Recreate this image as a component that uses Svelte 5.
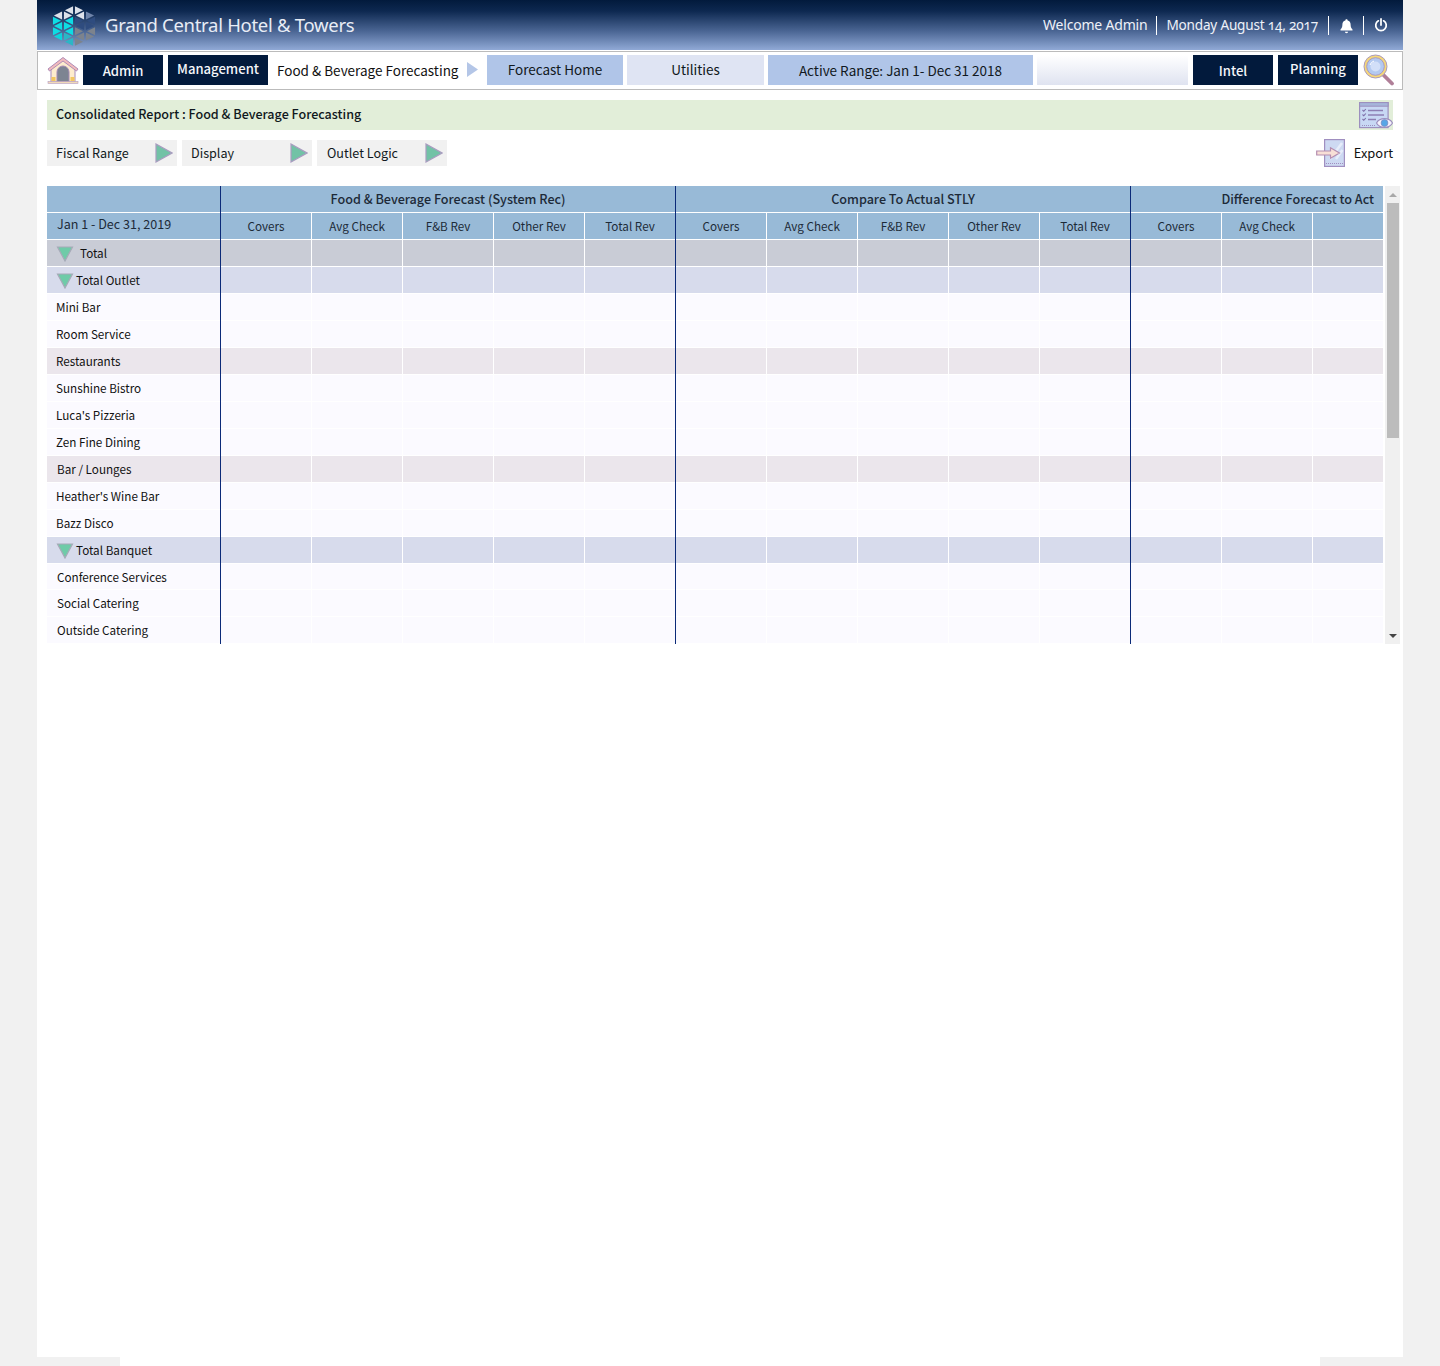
<script>
  const groups = [
    { title: 'Food & Beverage Forecast (System Rec)' },
    { title: 'Compare To Actual STLY' },
    { title: 'Difference Forecast to Act' }
  ];
  const cols = ['Covers','Avg Check','F&B Rev','Other Rev','Total Rev','Covers','Avg Check','F&B Rev','Other Rev','Total Rev','Covers','Avg Check',''];
  const rows = [
    { t:'Total', k:'total', tri:true, gap:true },
    { t:'Total Outlet', k:'outlet', tri:true },
    { t:'Mini Bar', k:'plain' },
    { t:'Room Service', k:'plain' },
    { t:'Restaurants', k:'sub' },
    { t:'Sunshine Bistro', k:'plain' },
    { t:"Luca's Pizzeria", k:'plain' },
    { t:'Zen Fine Dining', k:'plain' },
    { t:'Bar / Lounges', k:'sub', ind:true },
    { t:"Heather's Wine Bar", k:'plain' },
    { t:'Bazz Disco', k:'plain' },
    { t:'Total Banquet', k:'outlet', tri:true },
    { t:'Conference Services', k:'plain', ind:true, short:true },
    { t:'Social Catering', k:'plain', ind:true },
    { t:'Outside Catering', k:'plain', ind:true }
  ];
  const filters = ['Fiscal Range','Display','Outlet Logic'];

  // Logo: triangular lattice inside a hexagon, 44 x 42
  const tris = [];
  const colX = [0, 11, 22, 33, 44];
  const colY = [
    [10.5, 21, 31.5],
    [5.25, 15.75, 26.25, 36.75],
    [0, 10.5, 21, 31.5, 42],
    [5.25, 15.75, 26.25, 36.75],
    [10.5, 21, 31.5]
  ];
  function colour(cx, cy) {
    if (cy < 11) return cx > 34 ? '#6f84aa' : '#dde1ea';
    if (cx < 22) return cy > 30 ? (cx > 11 ? '#2bb6c6' : '#0cd4dc') : '#0edde4';
    if (cy < 22) return '#2f4c7f';
    return '#7c838d';
  }
  function addTri(a, b, c) {
    const cx = (a[0] + b[0] + c[0]) / 3, cy = (a[1] + b[1] + c[1]) / 3;
    const s = 0.74;
    const p = [a, b, c].map(v => `${(cx + (v[0] - cx) * s).toFixed(2)},${(cy + (v[1] - cy) * s).toFixed(2)}`).join(' ');
    tris.push({ p, f: colour(cx, cy) });
  }
  for (let c = 0; c < 4; c++) {
    const L = colY[c].map(y => [colX[c], y]);
    const R = colY[c + 1].map(y => [colX[c + 1], y]);
    const shortSide = L.length < R.length ? L : R;
    const longSide = L.length < R.length ? R : L;
    for (let i = 0; i < shortSide.length; i++) {
      addTri(shortSide[i], longSide[i], longSide[i + 1]);
      if (i < shortSide.length - 1) addTri(shortSide[i], shortSide[i + 1], longSide[i + 1]);
    }
  }
</script>

{#snippet playIcon()}
  <svg class="play" viewBox="0 0 18 20" width="18" height="20" aria-hidden="true">
    <path d="M1 1 L17 10 L1 19 Z" fill="#72c2a6" stroke="#a99cc0" stroke-width="1.2"/>
  </svg>
{/snippet}

{#snippet downIcon()}
  <svg class="down" viewBox="0 0 18 16" width="18" height="16" aria-hidden="true">
    <path d="M1.5 1 H16.5 L9 15 Z" fill="#6fcba8" stroke="#a7aab8" stroke-width="1.2"/>
  </svg>
{/snippet}

<div class="page">
  <div class="main">
    <header class="top">
      <svg class="logo" viewBox="0 0 44 42" width="44" height="42" aria-hidden="true">
        {#each tris as t}<polygon points={t.p} fill={t.f}/>{/each}
      </svg>
      <span class="brand">Grand Central Hotel &amp; Towers</span>
      <div class="topright">
        <span class="tr">Welcome Admin</span>
        <span class="tr sep date">Monday August 14, 2017</span>
        <span class="tr sep ic bell">
          <svg viewBox="0 0 16 16" width="15" height="16" aria-hidden="true"><path d="M8 0.8c.8 0 1.2.5 1.2 1.2 2.3.6 3.2 2.4 3.2 4.6 0 2.6.7 3.8 2 5.100v1H1.600v-1c1.300-1.300 2-2.500 2-5.100 0-2.200.9-4 3.200-4.600C6.800 1.300 7.200.8 8 .8zM6.300 14.200h3.400c0 1-.7 1.500-1.700 1.500s-1.700-.5-1.700-1.500z" fill="#fff"/></svg>
        </span>
        <span class="tr sep ic power">
          <svg viewBox="0 0 16 16" width="14" height="14" aria-hidden="true"><path d="M5 3.200a6 6 0 1 0 6 0" fill="none" stroke="#fff" stroke-width="2" stroke-linecap="round"/><path d="M8 1v7" stroke="#fff" stroke-width="2" stroke-linecap="round"/></svg>
        </span>
      </div>
    </header>

    <nav class="nav">
      <svg class="home" viewBox="0 0 32 28" width="32" height="28" aria-hidden="true">
        <path d="M4 12 L16 3 L28 12 V26 H4 Z" fill="#fdeccd" stroke="#b49cc4" stroke-width="1.200"/>
        <path d="M1 13 L16 1.500 L31 13 L29.500 15 L16 5 L2.500 15 Z" fill="#f2bcbc" stroke="#b08cb8" stroke-width="1"/>
        <path d="M10 26 V16 a6 6 0 0 1 12 0 V26 Z" fill="#7d8492" stroke="#a48ab4" stroke-width="1"/>
        <rect x="4.500" y="21" width="4" height="4" fill="#f3c75f"/>
        <rect x="23.500" y="21" width="4" height="4" fill="#f3c75f"/>
        <rect x="1" y="25.500" width="30" height="2" fill="#f0d9b8" stroke="#b49cc4" stroke-width=".6"/>
      </svg>
      <a class="n dark w80 low">Admin</a>
      <a class="n dark mgmt">Management</a>
      <span class="crumb">Food &amp; Beverage Forecasting</span>
      <svg class="carrot" viewBox="0 0 11 15" width="11" height="15" aria-hidden="true"><path d="M0 0 L11 7.500 L0 15 Z" fill="#b4c6e7"/></svg>
      <a class="n blue fh">Forecast Home</a>
      <a class="n pale ut">Utilities</a>
      <a class="n blue ar low">Active Range: Jan 1- Dec 31 2018</a>
      <span class="grad"></span>
      <a class="n dark w80 low">Intel</a>
      <a class="n dark w80">Planning</a>
      <svg class="search" viewBox="0 0 32 32" width="32" height="32" aria-hidden="true">
        <path d="M20.500 21 L29 29.500" stroke="#b07f98" stroke-width="3.800" stroke-linecap="round"/>
        <circle cx="12.500" cy="12.500" r="11.500" fill="#f6d877" stroke="#a99ac0" stroke-width="1"/>
        <circle cx="12.500" cy="12.500" r="8.800" fill="#b3c9f0" stroke="#a99ac0" stroke-width="1"/>
        <circle cx="12.500" cy="12.500" r="5" fill="#d2dff8"/>
        <path d="M7 11 a6 6 0 0 1 4-4" fill="none" stroke="#fff" stroke-width="1"/>
      </svg>
    </nav>

    <div class="content">
      <div class="title">
        <span class="titletext">Consolidated Report : Food &amp; Beverage Forecasting</span>
        <svg viewBox="0 0 34 28" width="34" height="28" aria-hidden="true">
          <rect x=".6" y=".6" width="28.500" height="25" fill="#c8d8f4" stroke="#9c8fbe" stroke-width="1.200"/>
          <rect x=".6" y=".6" width="28.500" height="3.600" fill="#a6b5da" stroke="#9c8fbe" stroke-width="1"/>
          <path d="M3.500 8 l1.300 1.300 2-2.300 M3.500 12.500 l1.300 1.300 2-2.300 M3.500 17 l1.300 1.300 2-2.300" fill="none" stroke="#7d6ca8" stroke-width="1.100"/>
          <path d="M9 8.500h15M9 13h16M9 17.500h8" stroke="#8d7fb4" stroke-width="1.300"/>
          <path d="M3 23.500h13" stroke="#9c8fbe" stroke-width="1" stroke-dasharray="1 1"/>
          <path d="M17.500 21 C20.500 15.200 30.500 15.200 33.500 21 C30.500 26.800 20.500 26.800 17.500 21Z" fill="#f4f1fb" stroke="#9c8fbe" stroke-width="1.100"/>
          <circle cx="25.500" cy="21" r="3.400" fill="#55a6e6" stroke="#7d8fc4" stroke-width=".8"/>
        </svg>
      </div>

      <div class="tools">
        {#each filters as f}
          <div class="filter"><span class="ftext">{f}</span>{@render playIcon()}</div>
        {/each}
        <div class="export">
          <svg viewBox="0 0 29 28" width="29" height="28" aria-hidden="true">
            <rect x="8.600" y=".6" width="19.800" height="26.800" fill="#cdd9f2" stroke="#a08fc0" stroke-width="1.200"/>
            <path d="M14 20 L26 4 M20 20 L26.500 11" stroke="#e6edfa" stroke-width="2.500"/>
            <path d="M10 24.500h17" stroke="#a08fc0" stroke-dasharray="1 1"/>
            <path d="M.7 12 H14.500 V8.800 L23.500 14 L14.500 19.200 V16 H.7 Z" fill="#f8dfd6" stroke="#b48db0" stroke-width="1.200"/>
          </svg>
          <span class="ftext">Export</span>
        </div>
      </div>

      <div class="gridwrap">
        <div class="tablebox">
          <table>
            <colgroup>
              <col class="c0"/>
              {#each cols as c, i}<col class={i === 12 ? 'clast' : 'cn'}/>{/each}
            </colgroup>
            <thead>
              <tr class="h1">
                <th class="first g"></th>
                <th colspan="5" class="g">{groups[0].title}</th>
                <th colspan="5" class="g">{groups[1].title}</th>
                <th colspan="3" class="right">{groups[2].title}</th>
              </tr>
              <tr class="h2">
                <th class="first g range">Jan 1 - Dec 31, 2019</th>
                {#each cols as c, i}<th class:g={i === 4 || i === 9}>{c}</th>{/each}
              </tr>
            </thead>
            <tbody>
              {#each rows as r}
                <tr class={r.k} class:short={r.short}>
                  <td class="first g">
                    <div class="rowlabel" class:tri={r.tri} class:ind={r.ind}>
                      {#if r.tri}{@render downIcon()}{/if}
                      <span class:gapped={r.gap}>{r.t}</span>
                    </div>
                  </td>
                  {#each cols as c, i}<td class:g={i === 4 || i === 9}></td>{/each}
                </tr>
              {/each}
            </tbody>
          </table>
        </div>
        <div class="scroll">
          <svg viewBox="0 0 8 4" width="8" height="4" aria-hidden="true"><path d="M0 4 L4 0 L8 4Z" fill="#a8a8a8"/></svg>
          <div class="thumbtrack"><div class="thumb"></div></div>
          <svg viewBox="0 0 8 4" width="8" height="4" aria-hidden="true"><path d="M0 0 L4 4 L8 0Z" fill="#444"/></svg>
        </div>
      </div>
    </div>
  </div>
  <div class="foot"></div>
</div>

<style>
  :global(body) { margin: 0; background: #f1f1f1; }
  .page {
    width: 1440px;
    height: 1366px;
    overflow: hidden;
    font-family: "Noto Sans CJK JP", "Noto Sans", sans-serif;
    color: #101820;
  }
  .main {
    width: 1366px;
    height: 1357px;
    margin: 0 auto;
    background: #fff;
  }
  .foot { width: 1200px; height: 9px; margin: 0 auto; background: #fff; }

  .top {
    height: 50px;
    display: flex;
    align-items: center;
    padding: 0 15px;
    background: linear-gradient(#021a3c 0%, #0d2850 22%, #4a6593 62%, #90a9d6 100%);
    color: #fff;
  }
  .logo { flex: none; margin-top: 1px; }
  .brand { margin-left: 9px; padding-bottom: 2px; font-size: 18.5px; color: #e8edf6; font-family: "Noto Sans", sans-serif; letter-spacing: -.29px; }
  .topright { margin-left: auto; display: flex; align-items: center; margin-top: 1px; }
  .tr {
    font-size: 14px;
    color: #eef1f8;
    font-family: "Noto Sans", sans-serif;
    letter-spacing: -.2px;
    padding: 0 9px 1px;
    height: 19px;
    box-sizing: border-box;
    line-height: 16px;
    display: flex;
    align-items: center;
    font-feature-settings: "onum";
  }
  .tr.sep { border-left: 1px solid #fff; }
  .date { font-size: 13.6px; padding-right: 10px; }
  .tr.ic { padding: 0 9px 0 10px; }
  .tr.power { padding: 0 0 1px 10px; }
  .bell svg { margin-top: 1px; }

  .nav {
    height: 39px;
    box-sizing: border-box;
    margin-top: 1px;
    border: 1px solid #bbb;
    display: flex;
    align-items: center;
    padding: 2px 9px 4px 9px;
    background: #fff;
    font-size: 13.5px;
  }
  .home { flex: none; margin-right: 4px; }
  .n { height: 30px; display: flex; align-items: center; justify-content: center; flex: none; box-sizing: border-box; padding-bottom: 2px; }
  .n.low { padding-bottom: 0; padding-top: 1px; }
  .dark { background: #021a3c; color: #f4f6fa; font-weight: 500; font-size: 13.1px; margin-right: 5px; }
  .w80 { width: 80px; }
  .mgmt { width: 100px; margin-right: 9px; }
  .crumb { color: #111; flex: none; width: 181px; white-space: nowrap; padding-top: 1px; }
  .carrot { margin: 0 9px; flex: none; }
  .blue { background: #b0c5e8; margin-right: 4px; }
  .fh { width: 136px; }
  .pale { background: #dfe4f3; margin-right: 4px; }
  .ut { width: 137px; }
  .ar { width: 265px; }
  .grad { width: 151px; height: 30px; background: linear-gradient(#fff, #dfe3f0); margin-right: 5px; flex: none; }
  .search { flex: none; margin-right: -3px; }

  .content { padding: 10px 10px 0; }
  .title {
    height: 30px;
    background: #e2eed9;
    display: flex;
    align-items: center;
    justify-content: space-between;
    padding-left: 9px;
    font-size: 12.56px;
    font-weight: 500;
  }
  .titletext { padding-bottom: 4px; }
  .title svg { flex: none; margin-top: 1px; }
  .tools { display: flex; height: 28px; margin-top: 10px; gap: 5px; font-size: 12.6px; }
  .filter {
    width: 130px;
    height: 26px;
    box-sizing: border-box;
    background: #f1f1f1;
    display: flex;
    align-items: center;
    justify-content: space-between;
    padding: 0 4px 0 9px;
  }
  .filter:nth-child(3) { padding-left: 10px; }
  .ftext { padding-bottom: 2px; }
  .play { flex: none; }
  .export { margin-left: auto; display: flex; align-items: center; gap: 9px; color: #111; padding-bottom: 2px; font-size: 12.9px; }

  .gridwrap { display: flex; margin-top: 18px; height: 458px; align-items: flex-start; }
  .tablebox { width: 1336px; height: 458px; overflow: hidden; flex: none; }
  table { border-collapse: separate; border-spacing: 0; table-layout: fixed; width: 1336px; font-size: 11.7px; }
  .c0 { width: 174px; }
  .cn { width: 91px; }
  .clast { width: 70px; }
  th, td { box-sizing: border-box; padding: 0; border-right: 1px solid #fff; box-shadow: inset 0 -1px 0 #fff; }
  th.g, td.g { border-right-color: #0b2a78; }
  th { background: #98bad7; font-weight: 400; color: #1d2a38; }
  tr th:last-child, tr td:last-child { border-right: 0; }
  .h1 th { height: 27px; font-size: 12.6px; font-weight: 500; padding-bottom: 3px; }
  .h1 th.right { text-align: right; padding-right: 9px; }
  .h2 th { height: 27px; padding-bottom: 2px; }
  .h2 th.range { text-align: left; padding: 0 0 7px 10px; font-size: 12.57px; }
  td { height: 27px; vertical-align: top; }
  tr.short td { height: 26px; }
  tr.total td { background: #c9ccd6; }
  tr.outlet td { background: #d7dbec; }
  tr.plain td { background: #fbfaff; }
  tr.sub td { background: #ebe6ec; }
  .rowlabel { display: flex; align-items: center; padding-left: 9px; height: 25px; color: #111; white-space: nowrap; }
  .rowlabel.ind { padding-left: 10px; }
  .rowlabel.tri { padding-left: 9px; gap: 2px; }
  .gapped { margin-left: 4px; }
  .down { flex: none; margin-top: 2px; }

  .scroll {
    width: 15px;
    margin-left: 2px;
    height: 458px;
    background: #f0f0f0;
    display: flex;
    flex-direction: column;
    align-items: center;
    flex: none;
    box-sizing: border-box;
    padding: 7px 0 6px;
  }
  .thumbtrack { flex: 1; width: 12px; padding-top: 6px; box-sizing: border-box; }
  .thumb { height: 235px; background: #bcbcbc; }
</style>
